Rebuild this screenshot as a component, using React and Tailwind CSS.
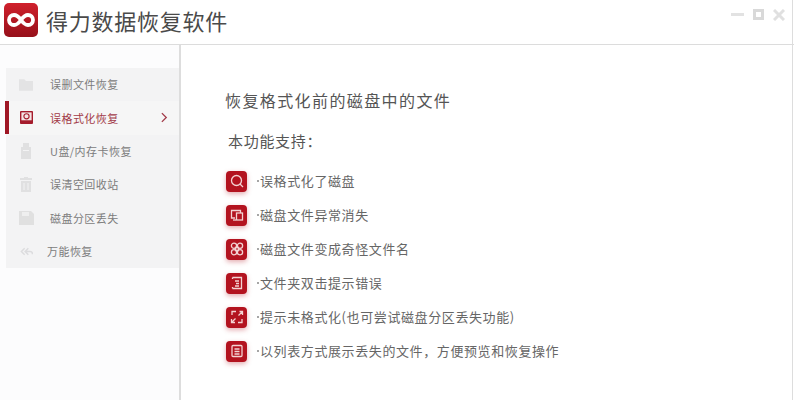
const cjk = { fontFamily: '"Noto Sans CJK SC", "Noto Sans", sans-serif' };

const I = ({ children, className = "w-[20px] h-[20px]", sw = 1.3 }) => (
  <svg viewBox="0 0 20 20" className={className} fill="none" stroke="currentColor" strokeWidth={sw}>
    {children}
  </svg>
);

const navIcons = [
  <svg viewBox="0 0 16 14" className="w-[14px] h-[13px]" fill="#e3e3e4"><path d="M0 1h6l2 2h8v11H0z" /></svg>,
  <svg viewBox="0 0 14 14" className="w-[13px] h-[13px]"><rect width="14" height="14" rx="1" fill="#a51c2c" /><rect x="1.500" y="1.500" width="11" height="8.500" fill="#f4e4e4" /><circle cx="7" cy="5.700" r="2.800" fill="none" stroke="#a51c2c" strokeWidth="1.200" /></svg>,
  <svg viewBox="0 0 12 16" className="w-[12px] h-[16px]" fill="#e0e0e1"><path d="M3 0h6v4h2v12H1V4h2z" /><rect x="3" y="7" width="6" height="1" fill="#f3f3f4" /></svg>,
  <svg viewBox="0 0 12 15" className="w-[12px] h-[15px]" fill="#e0e0e1"><path d="M4 0h4v1h4v2H0V1h4zM1 4h10v11H1z" /><path d="M4 6v7M8 6v7" stroke="#f3f3f4" /></svg>,
  <svg viewBox="0 0 15 14" className="w-[15px] h-[14px]" fill="#e0e0e0"><path d="M0 0h12l3 3v11H0z" /><rect x="3" y="1" width="7" height="4" fill="#efefef" /></svg>,
  <svg viewBox="0 0 14 9" className="w-[13px] h-[9px]" fill="none" stroke="#dcdcde" strokeWidth="1.600"><path d="M5 1 1.500 4.500 5 8M9 1 5.500 4.500 9 8M6 4.500h5c1.500 0 2.500 1 2.500 3" /></svg>,
];

const nav = [
  { t: "误删文件恢复", pl: "pl-[44px]" },
  { t: "误格式化恢复", active: true, pl: "pl-[44px]" },
  { t: "U盘/内存卡恢复", pl: "pl-[44px]" },
  { t: "误清空回收站", pl: "pl-[44px]" },
  { t: "磁盘分区丢失", pl: "pl-[44px]" },
  { t: "万能恢复", pl: "pl-[41px]" },
];

const featIcons = [
  <I><circle cx="9.500" cy="9.500" r="5" /><path d="m13 13 3 3" /></I>,
  <I><path d="M8 13H4.500V5.500h9V8" /><rect x="9.500" y="8" width="6" height="7" /><path d="M6 15h3" /></I>,
  <I><circle cx="7" cy="6.800" r="2.600" /><circle cx="13" cy="6.800" r="2.600" /><circle cx="7" cy="13.200" r="2.600" /><circle cx="13" cy="13.200" r="2.600" /><path d="M8.500 8.500h3v3h-3z" /></I>,
  <I><path d="M5.500 4.500h9v11h-9M5.500 4.500v1.500M5.500 14v1.500M8 8h4M9 10.500h3M8 13h4" /></I>,
  <I><path d="M9 4.500H5V8M11 15.500h4V12M12.500 4.500h3V8M8 15.500H4.500V12M5 15l3.500-3.500M15 5l-3.500 3.500" /></I>,
  <I><rect x="5" y="4.500" width="10" height="11" rx="1" /><path d="M7.500 8h5M7.500 10.500h5M7.500 13h5" /></I>,
];

const feats = [
  "误格式化了磁盘",
  "磁盘文件异常消失",
  "磁盘文件变成奇怪文件名",
  "文件夹双击提示错误",
  "提示未格式化(也可尝试磁盘分区丢失功能)",
  "以列表方式展示丢失的文件，方便预览和恢复操作",
];

export default function App() {
  return (
    <div className="w-[794px] h-[400px] overflow-hidden bg-white flex flex-col relative" style={cjk}>
      <header className="h-[45px] shrink-0 border-b border-[#dcdcdc] flex items-center pl-[4px] pr-[9px] pb-[4px]">
        <svg viewBox="0 0 34 34" className="w-[34px] h-[34px] shrink-0">
          <defs>
            <linearGradient id="lg" x1="0" y1="0" x2="0" y2="1">
              <stop offset="0" stopColor="#d0202c" />
              <stop offset="1" stopColor="#96101a" />
            </linearGradient>
          </defs>
          <rect width="34" height="34" rx="5" fill="url(#lg)" />
          <path d="M17 17c-2.500-3.500-4.500-5-7-5a5 5 0 0 0 0 10c2.500 0 4.500-1.500 7-5 2.500-3.500 4.500-5 7-5a5 5 0 0 1 0 10c-2.500 0-4.500-1.500-7-5Z" fill="none" stroke="#fff" strokeWidth="3.800" />
        </svg>
        <h1 className="ml-[8px] text-[22px] leading-[30px] font-normal text-[#4a4a4a] tracking-[0.75px]">得力数据恢复软件</h1>
        <div className="ml-auto flex items-center gap-[9px] mb-[11px]">
          <span className="w-[13px] h-[3px] bg-[#e2e2e2]" />
          <span className="w-[11px] h-[11px] border-[3px] border-[#d9d9d9]" />
          <svg viewBox="0 0 12 12" className="w-[12px] h-[12px]" stroke="#e0e0e0" strokeWidth="3"><path d="m1 1 10 10M11 1 1 11" /></svg>
        </div>
      </header>

      <div className="flex-1 flex min-h-0">
        <aside className="w-[181px] shrink-0 pt-[23px] pl-[6px] border-r-2 border-[#dddddd] bg-[#fcfcfd]">
          <nav className="flex flex-col bg-[#f3f3f4]">
            {nav.map((n, i) => (
              <div key={n.t} className={`h-[33.300px] flex items-center relative ${n.pl} text-[11px] ${n.active ? "text-[#a23a48] bg-[#f6f6f6]" : "text-[#7c7c7c]"}`}>
                {n.active && <span className="absolute left-[-1px] top-[0px] w-[4px] h-[33px] bg-[#9f1725]" />}
                <span className="absolute left-[12px] top-0 bottom-0 w-[16px] flex items-center justify-center">{navIcons[i]}</span>
                <span className="tracking-[0.45px]">{n.t}</span>
                {n.active && (
                  <svg viewBox="0 0 8 12" className="absolute left-[155px] top-[11px] w-[7px] h-[11px]" fill="none" stroke="#a23a48" strokeWidth="1.500"><path d="m1 1 5 5-5 5" /></svg>
                )}
              </div>
            ))}
          </nav>
        </aside>

        <main className="flex-1 pl-[44px] pt-[44px]">
          <h2 className="text-[16px] leading-[22px] font-normal text-[#555555] tracking-[1.4px]">恢复格式化前的磁盘中的文件</h2>
          <p className="mt-[19px] ml-[3px] text-[15px] leading-[22px] text-[#555555] tracking-[0.7px]">本功能支持：</p>
          <ul className="mt-[18px] flex flex-col gap-[12px]">
            {feats.map((f, i) => (
              <li key={f} className="flex items-center h-[22px] text-[13px] text-[#666666] tracking-[0.6px]">
                <span className="w-[21px] h-[21px] ml-[1px] rounded-[4px] bg-[#b3131f] text-[#f3d2d2] flex items-center justify-center shadow-[0_2px_5px_rgba(179,19,31,0.35)]">
                  {featIcons[i]}
                </span>
                <span className="ml-[10px] w-[2px] h-[2px] rounded-full bg-[#888888]" />
                <span className="ml-[1px]">{f}</span>
              </li>
            ))}
          </ul>
        </main>
      </div>
      <span className="absolute right-[1px] top-0 bottom-0 w-[1px] bg-[#dddddd]" />
    </div>
  );
}
